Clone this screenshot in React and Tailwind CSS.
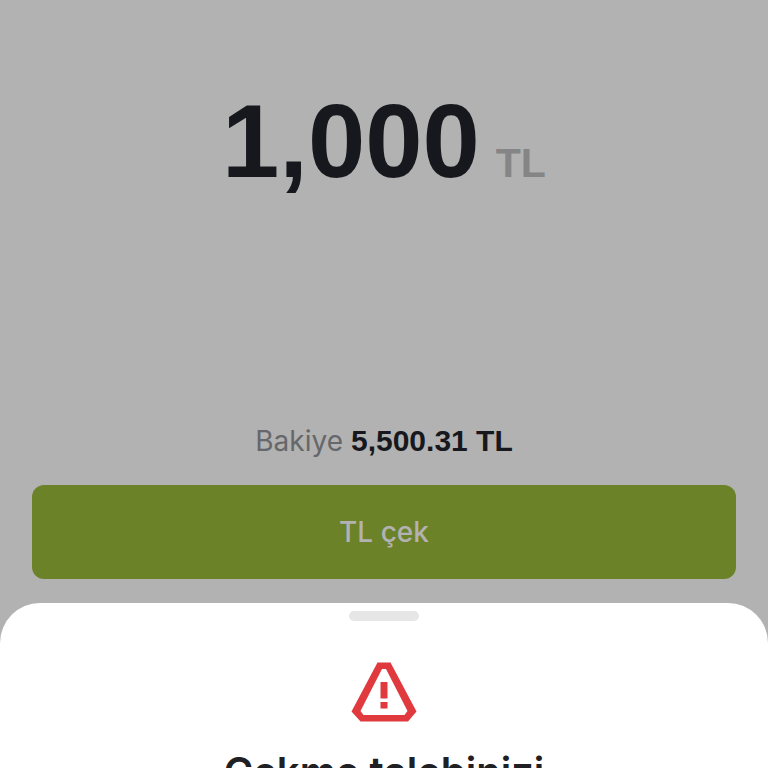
import React from 'react';

const WarningIcon = () => (
  <svg viewBox="0 0 66 60" className="h-[60px] w-[66px]" fill="#e03a3f" aria-hidden="true">
    <path
      fillRule="evenodd"
      d="M26.500 0.500H39.500L65.500 49.500L57 59.500H9.500L0.500 49.500ZM31 7L9.500 49L12.500 53H53.500L56.500 49L35 7Z"
    />
    <path d="M29.500 20H36.500V36.500H29.500ZM29.500 40H36.500V46.500H29.500Z" />
  </svg>
);

const WithdrawForm = ({ amount, balance, currency }) => (
  <main className="flex flex-col px-8 pt-[82px]">
    <p className="flex items-baseline justify-center gap-4 font-['Liberation_Sans',sans-serif] font-bold">
      <span className="text-[103px] leading-[120px] text-[#17181d]">{amount}</span>
      <span className="text-[41px] leading-[48px] text-[#858585]">{currency}</span>
    </p>

    <p className="mt-[219px] flex items-baseline justify-center gap-2 text-[28px] leading-10">
      <span className="text-[#66676a]">Bakiye</span>
      <span className="font-['Liberation_Sans',sans-serif] text-[30px] font-bold text-[#17181d]">
        {balance} {currency}
      </span>
    </p>

    <button
      type="button"
      className="mt-6 h-[94px] w-full rounded-xl bg-[#6b8229] text-[28px] leading-10 font-medium text-[#b2b2b2]"
    >
      {currency} çek
    </button>
  </main>
);

const BottomSheet = ({ title }) => (
  <section
    role="dialog"
    aria-labelledby="sheet-title"
    className="mt-6 flex shrink-0 grow flex-col items-center rounded-t-[40px] bg-white px-8 pt-2 pb-8"
  >
    <div className="h-[10px] w-[70px] rounded-full bg-[#e6e6e6]" />
    <div className="mt-[41px]">
      <WarningIcon />
    </div>
    <h2 id="sheet-title" className="mt-[26px] text-center text-[40px] leading-[48px] font-semibold text-[#1f2023]">
      {title}
    </h2>
  </section>
);

const App = () => {
  return (
    <div className="flex h-screen flex-col overflow-hidden bg-[#b2b2b2] font-['Inter',sans-serif]">
      <WithdrawForm amount="1,000" balance="5,500.31" currency="TL" />
      <BottomSheet title="Çekme talebinizi" />
    </div>
  );
};

export default App;
